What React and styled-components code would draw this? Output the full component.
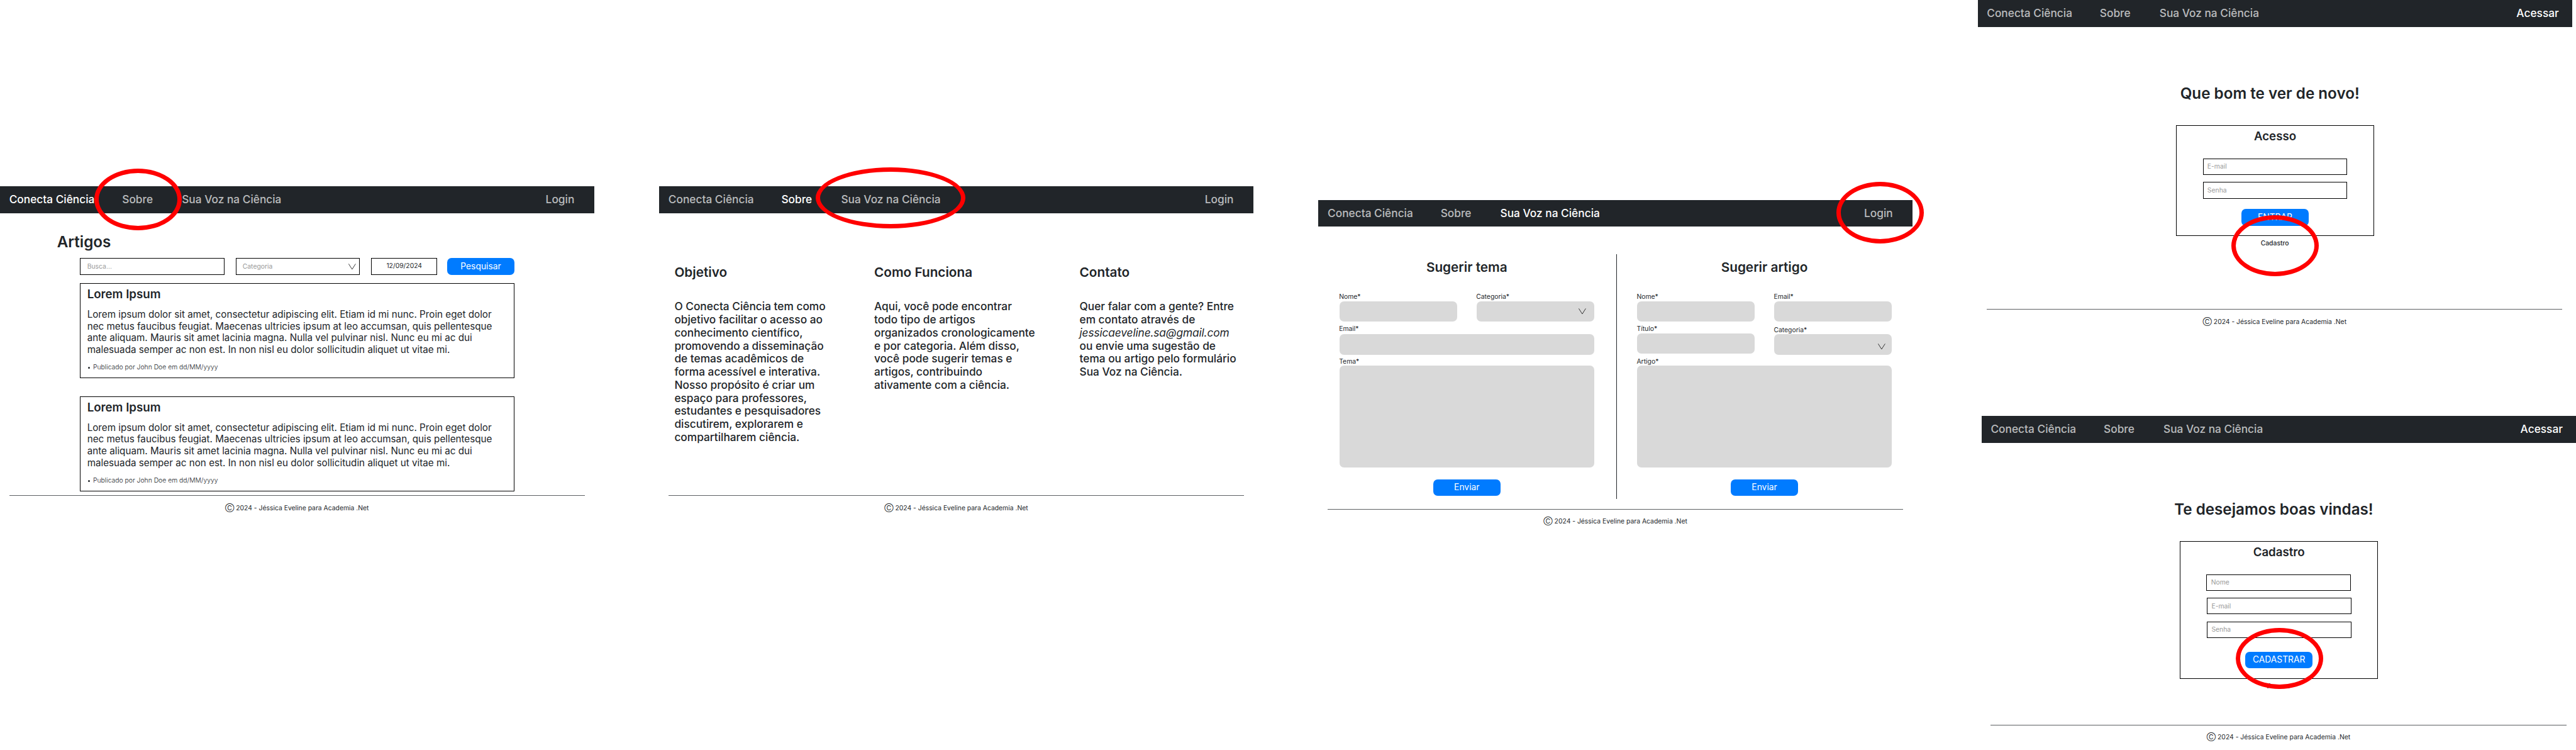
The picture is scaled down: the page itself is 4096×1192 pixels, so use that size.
import React from 'react';
import styled, { createGlobalStyle, css } from 'styled-components';

/* The boards are designed on 1366-unit frames; u() turns a design unit into page pixels. */
const SCALE = 4096 / 5920;
const u = (n) => `${+(n * SCALE).toFixed(3)}px`;

const INK = '#212529';
const BLUE = '#007bff';
const FIELD = '#d9d9d9';
const RED = '#ff0000';

const GlobalStyle = createGlobalStyle`
  *, *::before, *::after { box-sizing: border-box; }
  body { margin: 0; background: #fff; }
`;

const Board = styled.div`
  display: flex;
  align-items: flex-start;
  gap: ${u(149)};
  width: 4096px;
  height: 1192px;
  overflow: hidden;
  background: #fff;
  color: ${INK};
  font-family: Inter, 'Liberation Sans', sans-serif;
  white-space: nowrap;
`;

const Stack = styled.div`
  display: flex;
  flex-direction: column;
  gap: ${u(187)};
`;

const Frame = styled.section`
  position: relative;
  display: flex;
  flex-direction: column;
  flex: none;
  width: ${u(1366)};
  height: ${u(768)};
  margin-top: ${(p) => u(p.$top || 0)};
  margin-left: ${(p) => u(p.$indent || 0)};
`;

const Nav = styled.nav`
  display: grid;
  grid-template-columns: ${u(259.6)} ${u(137.2)} 1fr ${u(158)};
  flex: none;
  height: ${u(62)};
  padding: ${u(16)} 0 0 ${u(21.2)};
  background: ${INK};
`;

const NavLink = styled.a`
  color: ${(p) => (p.$active ? '#fff' : 'rgba(255, 255, 255, 0.7)')};
  font-size: ${u(25)};
  font-weight: 500;
  line-height: ${u(30)};
  &:last-child { text-align: center; }
`;

const Main = styled.main`
  display: flex;
  flex-direction: column;
  flex: none;
  height: ${u(648)};
  padding-top: ${(p) => u(p.$top || 0)};
`;

const FooterBar = styled.footer`
  margin: 0 ${u(22)} 0 ${u(21)};
  padding-top: ${u(19.5)};
  border-top: 1px solid #5c5f62;
  font-size: ${u(15)};
  line-height: ${u(18)};
  text-align: center;
`;

const Ring = styled.span`
  position: absolute;
  left: ${(p) => u(p.$x)};
  top: ${(p) => u(p.$y)};
  width: ${(p) => u(p.$w || 201)};
  height: ${u(141)};
  border: ${u(10.2)} solid ${RED};
  border-radius: 50%;
`;

const PageTitle = styled.h1`
  margin: 0;
  padding-left: ${u(131)};
  font-size: ${u(35)};
  font-weight: 600;
  line-height: ${u(42)};
`;

const WelcomeTitle = styled(PageTitle)`
  padding: 0 ${u(23)} 0 0;
  text-align: center;
`;

const Filters = styled.div`
  display: flex;
  margin: ${u(16)} 0 0 ${u(184)};
`;

const outlined = css`
  border: 1px solid #000;
  background: #fff;
`;

const Box = styled.div`
  ${outlined}
  display: flex;
  justify-content: space-between;
  width: ${(p) => u(p.$w || 332)};
  height: ${u(38)};
  margin-right: ${(p) => u(p.$after || 0)};
  margin-left: ${(p) => u(p.$nudge || 0)};
  padding: calc(${(p) => u(p.$top || 11)} - 1px) calc(${u(9)} - 1px) 0 calc(${(p) => u(p.$inset || 16.5)} - 1px);
  color: #999;
  font-size: ${u(15)};
  line-height: ${u(18)};
`;

const DateBox = styled(Box)`
  justify-content: center;
  padding: calc(${u(9.3)} - 1px) 0 0;
  color: ${INK};
`;

const Button = styled.button`
  display: flex;
  align-items: center;
  justify-content: center;
  width: ${u(154)};
  height: ${u(38)};
  margin: ${(p) => u(p.$top || 0)} 0 0;
  padding: 0;
  border: 0;
  border-radius: ${u(10)};
  background: ${BLUE};
  color: #fff;
  font-family: inherit;
  font-size: ${u(20)};
  line-height: ${u(24)};
`;

const ArrowSvg = styled.svg`
  flex: none;
  width: ${u(17)};
  height: ${u(14)};
  margin-top: ${(p) => u(p.$top || 0)};
  fill: none;
  stroke: #111;
`;

const Arrow = ({ top }) => (
  <ArrowSvg $top={top} viewBox="0 0 17 14">
    <path d="M0.5 0.5 L8.5 13 L16.5 0.5" strokeWidth="1.2" />
  </ArrowSvg>
);

const Card = styled.article`
  ${outlined}
  width: ${u(998)};
  height: ${u(219)};
  margin: ${(p) => u(p.$top)} 0 0 ${u(184)};
  padding: calc(${u(10.5)} - 1px) 0 0 calc(${u(16.4)} - 1px);
`;

const CardTitle = styled.h2`
  margin: 0;
  font-size: ${u(27)};
  font-weight: 600;
  line-height: ${u(33)};
`;

const CardText = styled.p`
  margin: ${u(16)} 0 0;
  font-size: ${u(22)};
  line-height: ${u(27)};
  white-space: pre;
`;

const Byline = styled.div`
  display: flex;
  align-items: center;
  gap: ${u(7)};
  margin: ${u(17.5)} 0 0 ${u(2)};
  font-size: ${u(15)};
  font-weight: 300;
  line-height: ${u(18)};
  &::before {
    content: '';
    width: ${u(4.5)};
    height: ${u(4.5)};
    margin-top: ${u(2)};
    border-radius: 50%;
    background: ${INK};
  }
`;

const Columns = styled.div`
  display: grid;
  grid-template-columns: ${u(459)} ${u(472)} 1fr;
  padding-left: ${u(35)};
`;

const ColumnTitle = styled.h2`
  margin: 0;
  font-size: ${u(30)};
  font-weight: 600;
  line-height: ${u(36)};
  text-align: ${(p) => (p.$center ? 'center' : 'left')};
`;

const ColumnText = styled.p`
  margin: ${u(45)} 0 0;
  font-size: ${u(25)};
  font-weight: 500;
  line-height: ${u(30)};
  white-space: pre;
`;

const Email = styled.em`
  font-weight: 400;
  letter-spacing: ${u(-0.16)};
`;

const Forms = styled.div`
  display: flex;
  padding: 0 ${u(48)};
`;

const Divider = styled.div`
  width: 1px;
  height: ${u(562)};
  margin: 0 calc(${u(48)} - 1px) 0 ${u(50)};
  background: ${INK};
`;

const Form = styled.form`
  display: flex;
  flex-direction: column;
  align-items: center;
  width: ${u(586)};
  padding-top: ${u(13)};
`;

const FormRow = styled.div`
  display: flex;
  justify-content: space-between;
  width: 100%;
  margin-top: ${(p) => u(p.$top)};
`;

const FieldBox = styled.label`
  display: flex;
  flex-direction: column;
  width: ${(p) => (p.$wide ? '100%' : u(271))};
  margin-top: ${(p) => u(p.$drop || 0)};
  font-size: ${u(15)};
  line-height: ${u(18)};
  text-indent: ${u(-0.5)};
`;

const FieldInput = styled.span`
  display: flex;
  justify-content: flex-end;
  height: ${(p) => u(p.$tall ? 234 : 47)};
  margin-top: ${(p) => u(p.$gap || 0)};
  padding-right: ${(p) => u(p.$inset || 0)};
  border-radius: ${u(10)};
  background: ${FIELD};
`;

const Field = ({ label, wide, tall, gap, drop, arrow }) => (
  <FieldBox $wide={wide} $drop={drop}>
    {label}
    <FieldInput $tall={tall} $gap={gap} $inset={arrow && arrow.inset}>
      {arrow && <Arrow top={arrow.top} />}
    </FieldInput>
  </FieldBox>
);

const Panel = styled.div`
  ${outlined}
  display: flex;
  flex-direction: column;
  align-items: center;
  width: ${u(455)};
  height: ${(p) => u(p.$h)};
  margin: ${u(52)} 0 0 ${u(456)};
  padding-top: calc(${u(10)} - 1px);
`;

const PanelTitle = styled.h2`
  height: ${u(33)};
  margin: 0 0 ${u(33)};
  font-size: ${u(27)};
  font-weight: 600;
  line-height: ${u(33)};
`;

const PanelFields = styled.div`
  display: flex;
  flex-direction: column;
  gap: ${u(16.4)};
`;

const PanelLink = styled.a`
  margin-top: ${u(8.5)};
  font-size: ${u(15)};
  font-weight: 500;
  line-height: ${u(18)};
  text-align: center;
`;

const NAV = ['Conecta Ciência', 'Sobre', 'Sua Voz na Ciência'];

const Header = ({ active, account = 'Login' }) => (
  <Nav>
    {[...NAV, account].map((item) => (
      <NavLink key={item} $active={item === active}>{item}</NavLink>
    ))}
  </Nav>
);

const Footer = () => <FooterBar>Ⓒ 2024 - Jéssica Eveline para Academia .Net</FooterBar>;

const LOREM = `Lorem ipsum dolor sit amet, consectetur adipiscing elit. Etiam id mi nunc. Proin eget dolor
nec metus faucibus feugiat. Maecenas ultricies ipsum at leo accumsan, quis pellentesque
ante aliquam. Mauris sit amet lacinia magna. Nulla vel pulvinar nisl. Nunc eu mi ac dui
malesuada semper ac non est. In non nisl eu dolor sollicitudin aliquet ut vitae mi.`;

const GOAL = `O Conecta Ciência tem como
objetivo facilitar o acesso ao
conhecimento científico,
promovendo a disseminação
de temas acadêmicos de
forma acessível e interativa.
Nosso propósito é criar um
espaço para professores,
estudantes e pesquisadores
discutirem, explorarem e
compartilharem ciência.`;

const HOW = `Aqui, você pode encontrar
todo tipo de artigos
organizados cronologicamente
e por categoria. Além disso,
você pode sugerir temas e
artigos, contribuindo
ativamente com a ciência.`;

const Article = ({ top }) => (
  <Card $top={top}>
    <CardTitle>Lorem Ipsum</CardTitle>
    <CardText>{LOREM}</CardText>
    <Byline>Publicado por John Doe em dd/MM/yyyy</Byline>
  </Card>
);

const ArticlesPage = () => (
  <Frame $top={428}>
    <Header active="Conecta Ciência" />
    <Main $top={45}>
      <PageTitle>Artigos</PageTitle>
      <Filters>
        <Box $after={26}>Busca...</Box>
        <Box $w={285} $after={26} $inset={15.5}>Categoria<Arrow top={2} /></Box>
        <DateBox $w={152} $after={23}>12/09/2024</DateBox>
        <Button>Pesquisar</Button>
      </Filters>
      <Article top={19} />
      <Article top={41} />
    </Main>
    <Footer />
    <Ring $x={217} $y={-40} />
  </Frame>
);

const AboutPage = () => (
  <Frame $top={428}>
    <Header active="Sobre" />
    <Main $top={119}>
      <Columns>
        <div>
          <ColumnTitle>Objetivo</ColumnTitle>
          <ColumnText>{GOAL}</ColumnText>
        </div>
        <div>
          <ColumnTitle>Como Funciona</ColumnTitle>
          <ColumnText>{HOW}</ColumnText>
        </div>
        <div>
          <ColumnTitle>Contato</ColumnTitle>
          <ColumnText>
            {'Quer falar com a gente? Entre\nem contato através de\n'}
            <Email>jessicaeveline.sa@gmail.com</Email>
            {'\nou envie uma sugestão de\ntema ou artigo pelo formulário\nSua Voz na Ciência.'}
          </ColumnText>
        </div>
      </Columns>
    </Main>
    <Footer />
    <Ring $x={359} $y={-44} $w={345} />
  </Frame>
);

const VoicePage = () => (
  <Frame $top={459}>
    <Header active="Sua Voz na Ciência" />
    <Main $top={63}>
      <Forms>
        <Form>
          <ColumnTitle $center>Sugerir tema</ColumnTitle>
          <FormRow $top={41}>
            <Field label="Nome*" />
            <Field label="Categoria*" arrow={{ top: 17, inset: 18.5 }} />
          </FormRow>
          <FormRow $top={9}><Field label="Email*" wide gap={2} /></FormRow>
          <FormRow $top={7}><Field label="Tema*" wide tall /></FormRow>
          <Button type="button" $top={27}>Enviar</Button>
        </Form>
        <Divider />
        <Form>
          <ColumnTitle $center>Sugerir artigo</ColumnTitle>
          <FormRow $top={41}>
            <Field label="Nome*" />
            <Field label="Email*" />
          </FormRow>
          <FormRow $top={9}>
            <Field label="Título*" />
            <Field label="Categoria*" drop={2} arrow={{ top: 21, inset: 14.5 }} />
          </FormRow>
          <FormRow $top={7}><Field label="Artigo*" wide tall /></FormRow>
          <Button type="button" $top={27}>Enviar</Button>
        </Form>
      </Forms>
    </Main>
    <Footer />
    <Ring $x={1190} $y={-41} />
  </Frame>
);

const LoginPage = () => (
  <Frame>
    <Header active="Acessar" account="Acessar" />
    <Main $top={132}>
      <WelcomeTitle>Que bom te ver de novo!</WelcomeTitle>
      <Panel $h={254}>
        <PanelTitle>Acesso</PanelTitle>
        <PanelFields>
          <Box $inset={10.5}>E-mail</Box>
          <Box $inset={10.5}>Senha</Box>
        </PanelFields>
        <Button $top={24}>ENTRAR</Button>
      </Panel>
      <PanelLink>Cadastro</PanelLink>
    </Main>
    <Footer />
    <Ring $x={583} $y={494} />
  </Frame>
);

const SignUpPage = () => (
  <Frame $indent={9}>
    <Header active="Acessar" account="Acessar" />
    <Main $top={132}>
      <WelcomeTitle>Te desejamos boas vindas!</WelcomeTitle>
      <Panel $h={317}>
        <PanelTitle>Cadastro</PanelTitle>
        <PanelFields>
          <Box $inset={10.5}>Nome</Box>
          <Box $inset={10.5} $nudge={1}>E-mail</Box>
          <Box $inset={10.5} $nudge={1}>Senha</Box>
        </PanelFields>
        <Button $top={31}>CADASTRAR</Button>
      </Panel>
      <PanelLink>Acesso</PanelLink>
    </Main>
    <Footer />
    <Ring $x={584.5} $y={487} />
  </Frame>
);

export default function App() {
  return (
    <>
      <GlobalStyle />
      <Board>
        <ArticlesPage />
        <AboutPage />
        <VoicePage />
        <Stack>
          <LoginPage />
          <SignUpPage />
        </Stack>
      </Board>
    </>
  );
}
